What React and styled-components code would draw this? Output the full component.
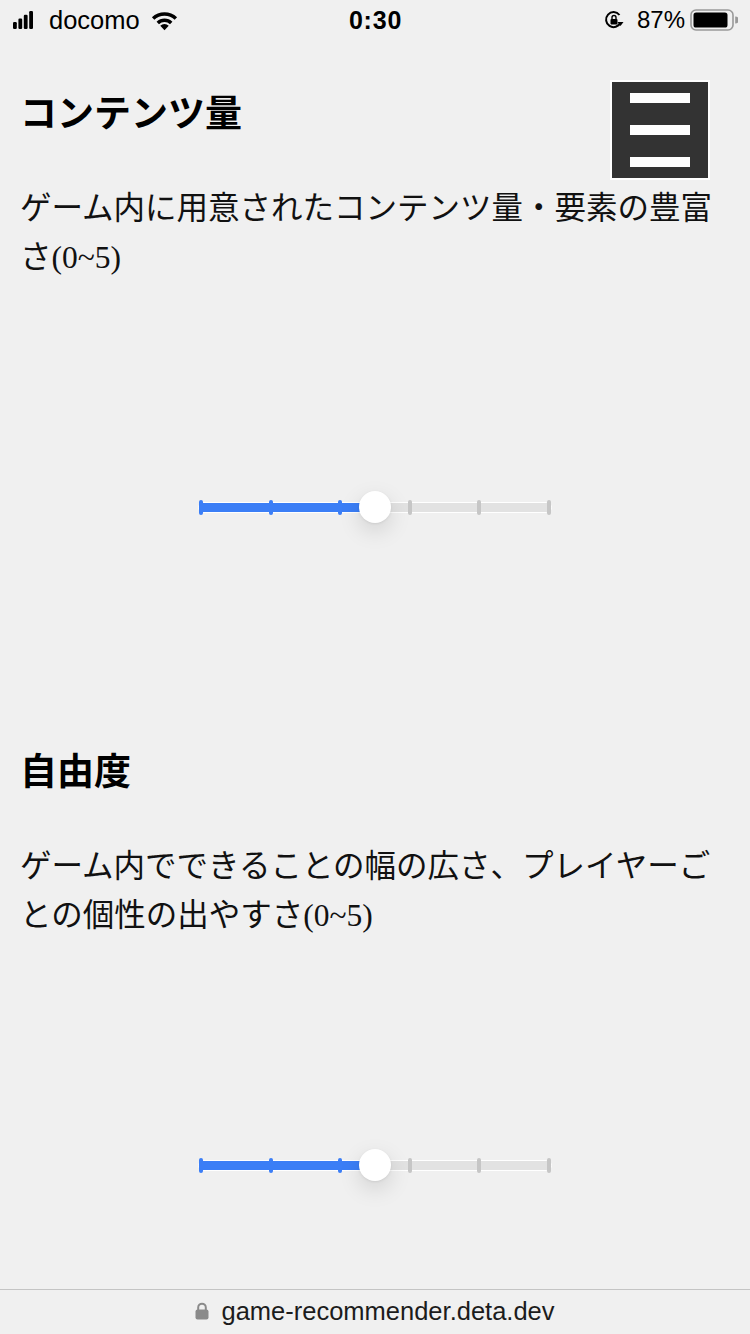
import React from 'react'
import styled, { createGlobalStyle } from 'styled-components'

const GlobalStyle = createGlobalStyle`
  html, body {
    margin: 0;
    padding: 0;
    background: #f0f0f0;
  }
  * { box-sizing: border-box; }
`

const Page = styled.div`
  position: relative;
  height: 100vh;
  display: flex;
  flex-direction: column;
  background: #f0f0f0;
  font-family: "Liberation Serif", "Noto Sans CJK JP", serif;
  color: #000;
  overflow: hidden;
`

const StatusBar = styled.div`
  height: 40px;
  flex-shrink: 0;
  display: grid;
  grid-template-columns: 1fr auto 1fr;
  align-items: center;
  padding: 0 12px 0 13px;
  font-family: "Liberation Sans", Arial, sans-serif;
  font-size: 24px;
  color: #000;
`

const StatusLeft = styled.div`
  display: flex;
  align-items: center;
  gap: 6px;
`

const Carrier = styled.span`
  margin-left: 10px;
  font-size: 25.5px;
`

const Clock = styled.span`
  font-weight: 700;
  font-size: 25px;
  letter-spacing: 0.8px;
`

const StatusRight = styled.div`
  display: flex;
  align-items: center;
  justify-content: flex-end;
  gap: 5px;
`

const Main = styled.main`
  padding: 47px 20px 0;
  display: flex;
  flex-direction: column;
  gap: 222px;
`

const MenuButton = styled.button`
  position: absolute;
  top: 80px;
  right: 40px;
  width: 100px;
  height: 100px;
  padding: 0;
  border: 2px solid #fff;
  background: #333;
  display: flex;
  flex-direction: column;
  align-items: center;
  justify-content: center;
  gap: 22px;
`

const MenuBar = styled.span`
  display: block;
  width: 60px;
  height: 10px;
  background: #fff;
`

const Section = styled.section``

const Heading = styled.h2`
  margin: 0;
  font-size: 37px;
  line-height: 56px;
  font-weight: 700;
`

const Description = styled.p`
  margin: 41px 0 0;
  font-size: 31.5px;
  line-height: 49px;
  color: #111;
`

const SliderWrap = styled.div`
  margin: 209px auto 0;
  width: 354px;
  height: 32px;
  position: relative;
  display: flex;
  align-items: center;
`

const Rail = styled.div`
  position: relative;
  width: 100%;
  height: 11px;
  border: 1.5px solid #fff;
  border-radius: 6px;
  background: #e2e2e2;
  display: flex;
  align-items: center;
`

const Fill = styled.div`
  position: absolute;
  left: 0;
  top: 0;
  bottom: 0;
  background: #3b7ef6;
  border-radius: 4px 0 0 4px;
`

const Ticks = styled.div`
  position: relative;
  width: 100%;
  display: flex;
  justify-content: space-between;
  align-items: center;
`

const Tick = styled.span`
  width: 4px;
  height: 15px;
  border-radius: 2px;
  background: ${({ $on }) => ($on ? '#3b7ef6' : '#c6c6c6')};
`

const Thumb = styled.div`
  position: absolute;
  top: 0;
  width: 32px;
  height: 32px;
  margin-left: -16px;
  border-radius: 50%;
  background: #fff;
  box-shadow: 0 8px 22px rgba(0, 0, 0, 0.13), 0 1px 3px rgba(0, 0, 0, 0.08);
`

const UrlBar = styled.footer`
  margin-top: auto;
  flex-shrink: 0;
  height: 45px;
  border-top: 1px solid #c4c4c4;
  display: flex;
  align-items: center;
  justify-content: center;
  gap: 12px;
  font-family: "Liberation Sans", Arial, sans-serif;
  font-size: 25.5px;
  color: #1c1c1c;
  padding-bottom: 2px;
`

const Signal = () => (
  <svg width="20" height="18" viewBox="0 0 20 18">
    <rect x="0" y="11" width="3.8" height="7" rx="1.2" fill="#000" />
    <rect x="5.4" y="7.5" width="3.8" height="10.5" rx="1.2" fill="#000" />
    <rect x="10.8" y="3.8" width="3.8" height="14.2" rx="1.2" fill="#000" />
    <rect x="16.2" y="0" width="3.8" height="18" rx="1.2" fill="#000" />
  </svg>
)

const Wifi = () => (
  <svg width="29" height="22" viewBox="0 0 30 22" style={{ marginLeft: 4 }}>
    <path d="M15 21.5 L10.6 17 A6.4 6.4 0 0 1 19.4 17 Z" fill="#000" />
    <path d="M6.8 12.8 A12 12 0 0 1 23.2 12.8 L20.7 15.4 A8.4 8.4 0 0 0 9.3 15.4 Z" fill="#000" />
    <path d="M2 8.2 A18.6 18.6 0 0 1 28 8.2 L25.5 10.8 A15 15 0 0 0 4.5 10.8 Z" fill="#000" />
  </svg>
)

const RotationLock = () => (
  <svg width="20" height="20" viewBox="0 0 20 20" style={{ marginRight: 8 }}>
    <path d="M16.5 12.5 A7.5 7.5 0 1 1 15.5 5" fill="none" stroke="#000" strokeWidth="2" />
    <path d="M13.5 12 L19.5 12 L16.5 16 Z" fill="#000" />
    <rect x="6.5" y="9" width="7" height="5.5" rx="1" fill="#000" />
    <path d="M8 9 V7.5 A2 2 0 0 1 12 7.5 V9" fill="none" stroke="#000" strokeWidth="1.4" />
  </svg>
)

const Battery = () => (
  <svg width="48" height="22" viewBox="0 0 48 22">
    <rect x="1" y="1" width="42" height="20" rx="5" fill="none" stroke="#999" strokeWidth="1.6" />
    <rect x="3.5" y="3.5" width="34" height="15" rx="2.6" fill="#000" />
    <path d="M45.2 7.5 A3 3 0 0 1 45.2 14.5 Z" fill="#999" />
  </svg>
)

const Lock = () => (
  <svg width="14" height="18" viewBox="0 0 14 18">
    <path d="M3.2 8 V5.5 A3.8 3.8 0 0 1 10.8 5.5 V8" fill="none" stroke="#8a8a8a" strokeWidth="2" />
    <rect x="0.5" y="7.5" width="13" height="10" rx="2" fill="#8a8a8a" />
  </svg>
)

const Slider = ({ value, max = 5 }) => {
  const left = 2 + (value / max) * 350
  return (
    <SliderWrap>
      <Rail>
        <Fill style={{ width: left }} />
        <Ticks>
          {Array.from({ length: max + 1 }, (_, i) => (
            <Tick key={i} $on={i <= value} />
          ))}
        </Ticks>
      </Rail>
      <Thumb style={{ left }} />
    </SliderWrap>
  )
}

const sections = [
  {
    title: 'コンテンツ量',
    text: 'ゲーム内に用意されたコンテンツ量・要素の豊富さ(0~5)',
    value: 2.5,
  },
  {
    title: '自由度',
    text: 'ゲーム内でできることの幅の広さ、プレイヤーごとの個性の出やすさ(0~5)',
    value: 2.5,
  },
]

const App = () => {
  return (
    <Page>
      <GlobalStyle />
      <StatusBar>
        <StatusLeft>
          <Signal />
          <Carrier>docomo</Carrier>
          <Wifi />
        </StatusLeft>
        <Clock>0:30</Clock>
        <StatusRight>
          <RotationLock />
          <span>87%</span>
          <Battery />
        </StatusRight>
      </StatusBar>

      <Main>
        {sections.map((s) => (
          <Section key={s.title}>
            <Heading>{s.title}</Heading>
            <Description>{s.text}</Description>
            <Slider value={s.value} />
          </Section>
        ))}
      </Main>

      <MenuButton aria-label="menu">
        <MenuBar />
        <MenuBar />
        <MenuBar />
      </MenuButton>

      <UrlBar>
        <Lock />
        <span>game-recommender.deta.dev</span>
      </UrlBar>
    </Page>
  )
}

export default App
